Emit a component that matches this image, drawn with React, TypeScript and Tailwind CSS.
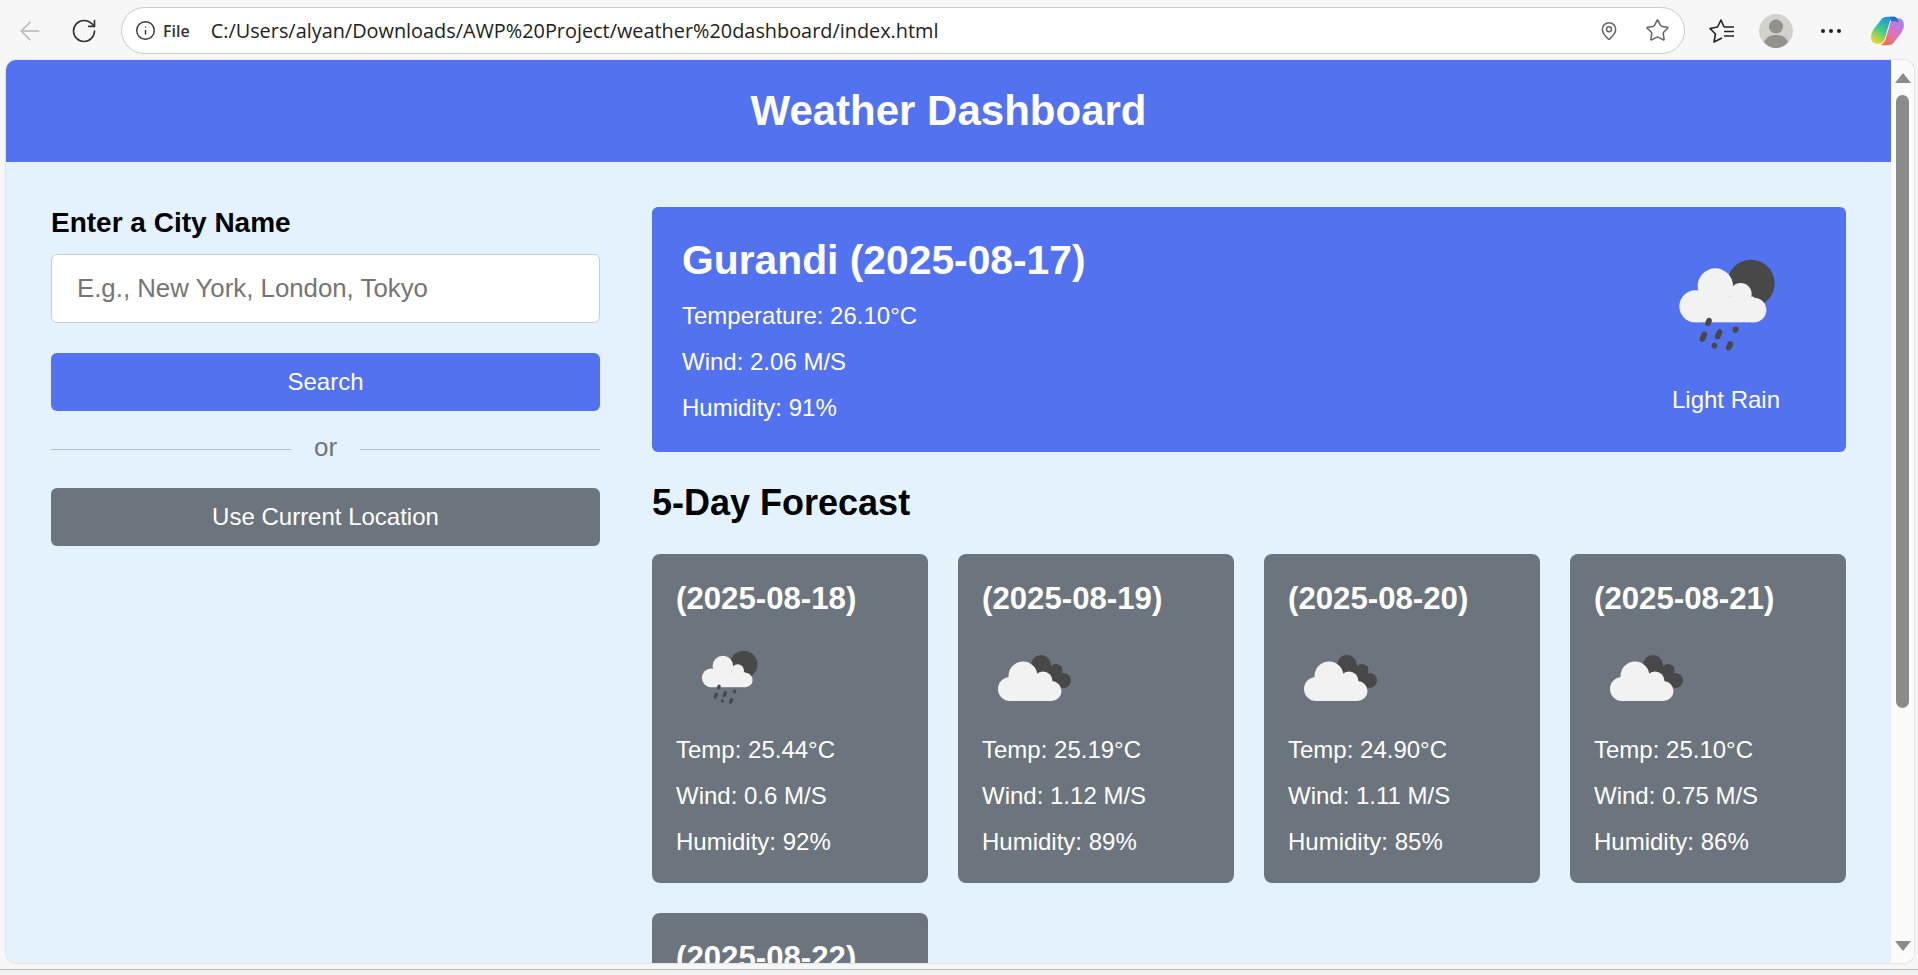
import { ArrowLeft, Info, MapPin, RotateCw, Star } from 'lucide-react';

const RainIcon = ({ className }: { className: string }) => (
  <svg viewBox="45 -48 540 540" className={className}>
    <circle cx="393" cy="160" r="71" fill="#484848" />
    <g fill="#f2f2f2">
      <circle cx="226" cy="229" r="48" />
      <circle cx="286" cy="168" r="53" />
      <circle cx="362" cy="192" r="33" />
      <circle cx="402" cy="240" r="37" />
      <rect x="226" y="200" width="176" height="77" />
    </g>
    <g stroke="#484848" strokeWidth="17" strokeLinecap="round">
      <path d="M267 272 L264 280" />
      <path d="M253 313 L247 327" />
      <path d="M299 306 L293 320" />
      <path d="M347 298 L346 300" />
      <path d="M283 347 L283 347.5" />
      <path d="M331 342 L326 353" />
    </g>
  </svg>
);

const CloudIcon = ({ className }: { className: string }) => (
  <svg viewBox="0 0 105 105" className={className}>
    <g fill="#484848">
      <circle cx="59" cy="41" r="10" />
      <circle cx="74" cy="46.5" r="6.5" />
      <circle cx="81.5" cy="56.5" r="7.5" />
      <rect x="52" y="42" width="28" height="22" />
    </g>
    <g fill="#f2f2f2">
      <circle cx="28" cy="65" r="12" />
      <circle cx="41" cy="52" r="14.5" />
      <circle cx="61" cy="57" r="9.5" />
      <circle cx="69.5" cy="67" r="10" />
      <rect x="28" y="52" width="41" height="25" />
    </g>
  </svg>
);

const FavoritesIcon = () => (
  <svg viewBox="0 0 26 24" className="w-[26px] h-[24px]" fill="none" stroke="#222" strokeWidth="1.6">
    <path d="M15 8 L12 1 L8.5 8 L1 9.5 L6.5 15 L5 23 L13 19" strokeLinejoin="round" />
    <path d="M15 8 H25 M15 12.5 H25 M15 17 H25" />
  </svg>
);

const Avatar = () => (
  <svg viewBox="0 0 34 34" className="w-[34px] h-[34px]">
    <circle cx="17" cy="17" r="17" fill="#d2d1cd" />
    <circle cx="17" cy="12.5" r="7" fill="#94918d" />
    <path d="M5 28 C8 22 12 21 17 21 C22 21 26 22 29 28 C26 32 21 34 17 34 C13 34 8 32 5 28 Z" fill="#94918d" />
  </svg>
);

const CopilotLogo = () => (
  <svg viewBox="0 0 100 90" className="w-[33px] h-[30px]">
    <defs>
      <linearGradient id="copA" x1="0.7" y1="0" x2="0.2" y2="1">
        <stop offset="0" stopColor="#1f8fe8" />
        <stop offset="0.45" stopColor="#36c98f" />
        <stop offset="1" stopColor="#f3d92c" />
      </linearGradient>
      <linearGradient id="copB" x1="0.8" y1="0.2" x2="0.2" y2="1">
        <stop offset="0" stopColor="#b77be8" />
        <stop offset="0.55" stopColor="#ea6fb0" />
        <stop offset="1" stopColor="#f2702c" />
      </linearGradient>
    </defs>
    <path d="M28 14 Q34 2 50 2 H72 Q60 6 55 22 L42 68 Q38 84 22 84 H18 Q0 84 0 62 Q0 52 8 40 Z" fill="url(#copA)" />
    <path d="M72 76 Q66 88 50 88 H28 Q40 84 45 68 L58 22 Q62 6 78 6 H82 Q100 6 100 28 Q100 38 92 50 Z" fill="url(#copB)" />
    <path d="M58 2 H70 Q80 2 84 20 Q72 10 62 18 Z" fill="#1d6fd8" />
  </svg>
);

const forecast = [
  { date: '(2025-08-18)', temp: '25.44', wind: '0.6', humidity: '92', rain: true },
  { date: '(2025-08-19)', temp: '25.19', wind: '1.12', humidity: '89', rain: false },
  { date: '(2025-08-20)', temp: '24.90', wind: '1.11', humidity: '85', rain: false },
  { date: '(2025-08-21)', temp: '25.10', wind: '0.75', humidity: '86', rain: false },
  { date: '(2025-08-22)', temp: '25.32', wind: '0.9', humidity: '88', rain: false },
];

export default function App() {
  return (
    <div className="h-[975px] w-[1918px] overflow-hidden flex flex-col bg-[#f7f7f7] font-['Liberation_Sans',Arial,sans-serif]">
      {/* browser toolbar */}
      <div className="h-[60px] shrink-0 flex items-center pt-[1px]">
        <div className="w-[121px] shrink-0 flex items-center pl-[15px]">
          <ArrowLeft className="w-[30px] h-[30px] text-[#b5b5b5]" strokeWidth={1.2} />
          <RotateCw className="w-[28px] h-[28px] text-[#333] ml-[25px]" strokeWidth={1.4} />
        </div>
        <div className="w-[1564px] h-[47px] shrink-0 rounded-full border border-[#cbcbcb] bg-white flex items-center pl-[13px] pr-[14px] font-['Open_Sans',sans-serif]">
          <Info className="w-[21px] h-[21px] text-[#333]" strokeWidth={1.6} />
          <span className="ml-[7px] text-[16px] font-semibold text-[#333]">File</span>
          <span className="ml-[21px] text-[19.87px] text-[#222] whitespace-nowrap">
            C:/Users/alyan/Downloads/AWP%20Project/weather%20dashboard/index.html
          </span>
          <MapPin className="ml-auto w-[20px] h-[20px] text-[#666]" strokeWidth={1.8} />
          <Star className="ml-[26px] w-[25px] h-[25px] text-[#666]" strokeWidth={1.5} />
        </div>
        <div className="ml-[24px]"><FavoritesIcon /></div>
        <div className="ml-[24px]"><Avatar /></div>
        <div className="ml-[28px] flex gap-[4px]">
          <span className="w-[4px] h-[4px] rounded-full bg-[#222]" />
          <span className="w-[4px] h-[4px] rounded-full bg-[#222]" />
          <span className="w-[4px] h-[4px] rounded-full bg-[#222]" />
        </div>
        <div className="ml-[30px]"><CopilotLogo /></div>
      </div>

      {/* page viewport */}
      <div className="h-[903px] shrink-0 ml-[6px] mr-[4px] flex rounded-[10px] overflow-hidden bg-white shadow-[0_0_2px_rgba(0,0,0,0.25)]">
        <div className="w-[1885px] shrink-0 overflow-hidden bg-[#e3f2fd]">
          <h1 className="h-[102px] pb-[2px] bg-[#5372f0] text-white text-[42px] font-bold flex items-center justify-center">
            Weather Dashboard
          </h1>
          <div className="flex gap-[52px] px-[45px] pt-[45px]">
            <div className="w-[549px] shrink-0">
              <h3 className="text-[28px] leading-[32px] font-bold text-black">Enter a City Name</h3>
              <input
                type="text"
                placeholder="E.g., New York, London, Tokyo"
                className="mt-[15px] block w-full h-[69px] px-[25px] text-[25.8px] bg-white border border-[#ccc] rounded-[6px] outline-none placeholder:text-[#757575]"
              />
              <button className="mt-[30px] block w-full h-[58px] rounded-[6px] bg-[#5372f0] text-white text-[24px]">
                Search
              </button>
              <div className="h-[77px] flex items-center gap-[23px] text-[#6c757d] text-[26px]">
                <span className="flex-1 h-px bg-[#b5bcc2]" />
                <span className="-mt-[4px]">or</span>
                <span className="flex-1 h-px bg-[#b5bcc2]" />
              </div>
              <button className="block w-full h-[58px] rounded-[6px] bg-[#6c757d] text-white text-[24px]">
                Use Current Location
              </button>
            </div>

            <div className="flex-1 min-w-0">
              <div className="h-[245px] rounded-[6px] bg-[#5372f0] text-white flex justify-between pl-[30px] pr-[29px] pt-[30px]">
                <div>
                  <h2 className="text-[40.8px] leading-[47px] font-bold">Gurandi (2025-08-17)</h2>
                  <p className="mt-[18px] text-[24px] leading-[28px]">Temperature: 26.10°C</p>
                  <p className="mt-[18px] text-[24px] leading-[28px]">Wind: 2.06 M/S</p>
                  <p className="mt-[18px] text-[24px] leading-[28px]">Humidity: 91%</p>
                </div>
                <div className="w-[182px] text-center -mt-[23px]">
                  <RainIcon className="w-[180px] h-[180px]" />
                  <p className="-mt-[8px] text-[24px] leading-[28px]">Light Rain</p>
                </div>
              </div>

              <h2 className="mt-[30px] text-[36px] leading-[41px] font-bold text-black">5-Day Forecast</h2>

              <div className="mt-[31px] grid grid-cols-4 gap-x-[30px] gap-y-[30px]">
                {forecast.map((day) => (
                  <div key={day.date} className="h-[329px] rounded-[8px] bg-[#6c757d] text-white px-[24px] pt-[27px]">
                    <h3 className="text-[31.2px] leading-[36px] font-bold">{day.date}</h3>
                    {day.rain ? (
                      <RainIcon className="mt-[7px] w-[105px] h-[105px]" />
                    ) : (
                      <CloudIcon className="mt-[7px] w-[105px] h-[105px]" />
                    )}
                    <p className="mt-[7px] text-[24px] leading-[28px]">Temp: {day.temp}°C</p>
                    <p className="mt-[18px] text-[24px] leading-[28px]">Wind: {day.wind} M/S</p>
                    <p className="mt-[18px] text-[24px] leading-[28px]">Humidity: {day.humidity}%</p>
                  </div>
                ))}
              </div>
            </div>
          </div>
        </div>

        {/* scrollbar */}
        <div className="flex-1 flex flex-col items-center pt-[13px] pb-[12px] bg-[#fbfbfb]">
          <div className="w-0 h-0 border-x-[8px] border-x-transparent border-b-[10px] border-b-[#8b8b8b]" />
          <div className="mt-[12px] w-[13px] h-[613px] rounded-full bg-[#8b8b8b]" />
          <div className="mt-auto w-0 h-0 border-x-[8px] border-x-transparent border-t-[10px] border-t-[#8b8b8b]" />
        </div>
      </div>

      <div className="h-[6px] shrink-0" />
      <div className="flex-1 border-t border-[#bdbdbd] bg-[#efefef]" />
    </div>
  );
}
